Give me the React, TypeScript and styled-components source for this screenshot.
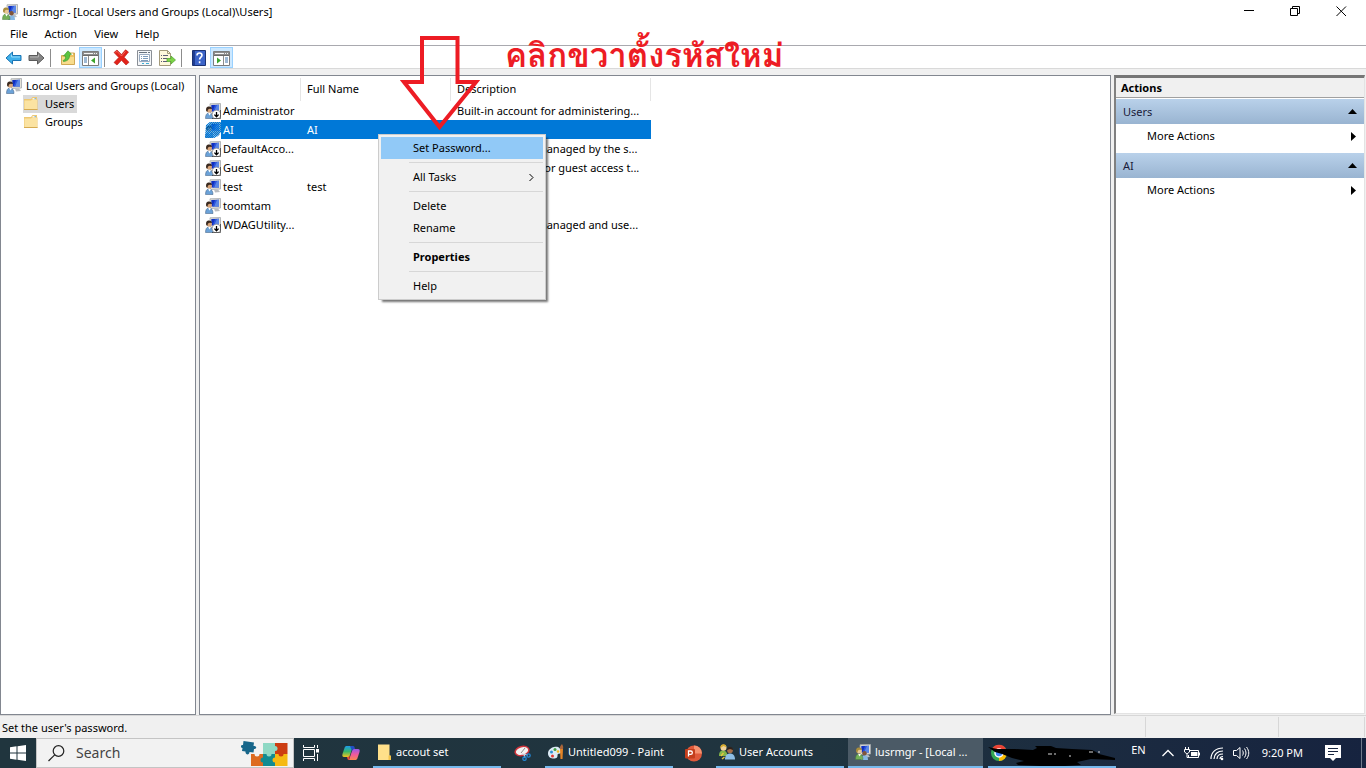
import React from 'react';
import styled, { createGlobalStyle, css } from 'styled-components';

const GlobalStyle = createGlobalStyle`
  * { box-sizing: border-box; }
  body { margin: 0; background: #f0f0f0; }
  body, button, input, table {
    font-family: "Noto Sans", "Open Sans", sans-serif;
    font-size: 11px;
    line-height: 16px;
    color: #000;
  }
  button { border: 0; padding: 0; background: none; text-align: left; }
  svg { display: block; flex: none; }
`;

/* ---------- window frame ---------- */

const Desktop = styled.div`
  display: flex;
  flex-direction: column;
  min-height: 100vh;
  position: relative;
`;

const TitleBar = styled.header`
  display: flex;
  align-items: center;
  height: 23px;
  padding: 0 4px 0 2px;
  gap: 5px;
  background: #fff;
`;

const Title = styled.h1`
  flex: 1;
  margin: 0;
  font-size: 11px;
  font-weight: 400;
`;

const CaptionButton = styled.button`
  display: flex;
  align-items: center;
  justify-content: center;
  width: 41px;
  height: 21px;
`;

const MenuBar = styled.nav`
  display: flex;
  align-items: center;
  height: 23px;
  padding-left: 2px;
  background: #fff;
  border-bottom: 1px solid #a9a9af;
`;

const MenuBarButton = styled.button`
  padding: 0 9px 0 8px;
`;

const Toolbar = styled.div`
  display: flex;
  align-items: flex-end;
  height: 23px;
  padding-left: 2px;
  background: #fff;
  border-bottom: 1px solid #d9d9d9;
`;

const ToolButton = styled.button<{ $on?: boolean }>`
  display: flex;
  align-items: center;
  justify-content: center;
  width: 23px;
  height: 21px;
  ${(p) => p.$on && css`
    background: #cce8ff;
    border: 1px solid #99d1ff;
  `}
`;

const ToolDivider = styled.span`
  width: 1px;
  height: 18px;
  margin: 0 5px 1px 2px;
  background: #8c8c8c;
`;

const Body = styled.main`
  flex: 1;
  display: grid;
  grid-template-columns: 196px minmax(0, 1fr) 252px;
  gap: 3px;
  padding-top: 6px;
`;

const Panel = styled.section`
  background: #fff;
  border: 1px solid #828790;
`;

/* ---------- tree ---------- */

const Tree = styled.ul`
  list-style: none;
  margin: 0;
  padding: 1px 0 0 5px;
`;

const Branch = styled(Tree)`
  padding: 0 0 0 17px;
`;

const TreeButton = styled.button<{ $selected?: boolean }>`
  display: flex;
  align-items: center;
  height: 18px;
  gap: 4px;
  padding-right: 3px;
  white-space: nowrap;
  ${(p) => p.$selected && css`background: #d9d9d9;`}
`;

const FolderLabel = styled.span`
  padding-left: 2px;
`;

/* ---------- user list ---------- */

const UserTable = styled.table`
  width: 451px;
  table-layout: fixed;
  border-collapse: collapse;
`;

const HeadCell = styled.th<{ $width: number }>`
  width: ${(p) => p.$width}px;
  height: 25px;
  padding: 0 0 0 6px;
  font-weight: 400;
  text-align: left;
  background: linear-gradient(#e5e5e5, #e5e5e5) right 2px / 1px 100% no-repeat;
  &:first-child { padding-left: 7px; }
`;

const Cell = styled.td<{ $selected?: boolean }>`
  height: 19px;
  padding: 0 0 0 6px;
  white-space: nowrap;
  overflow: hidden;
  ${(p) => p.$selected && css`
    background: #0078d7;
    color: #fff;
  `}
`;

const NameCell = styled.td`
  height: 19px;
  padding: 0 0 0 5px;
`;

const NameContent = styled.div`
  display: flex;
  align-items: center;
  height: 19px;
`;

const UserName = styled.span<{ $selected?: boolean }>`
  flex: 1;
  padding: 2px 0 1px 2px;
  white-space: nowrap;
  ${(p) => p.$selected && css`
    background: #0078d7;
    color: #fff;
  `}
`;

/* ---------- actions ---------- */

const ActionsPanel = styled.aside`
  margin-bottom: 1px;
  margin-right: 1px;
  background: #fff;
  border: 2px solid #696969;
  border-width: 3px 1px 1px 2px;
  border-color: #767676 #e3e3e3 #e3e3e3 #808080;
`;

const ActionsTitle = styled.h2`
  margin: 0 0 1px;
  height: 20px;
  padding: 2px 5px;
  font-size: 11px;
  font-weight: 700;
  background: #f0f0f0;
  border-bottom: 1px solid #a0a0a0;
`;

const GroupHeader = styled.button`
  display: flex;
  align-items: center;
  justify-content: space-between;
  width: 100%;
  height: 25px;
  padding: 0 7px;
  color: #1b1b3a;
  background: linear-gradient(#b9d1ea, #99b4d1);
`;

const ActionRow = styled.button`
  display: flex;
  align-items: center;
  justify-content: space-between;
  width: 100%;
  height: 24px;
  margin-bottom: 5px;
  padding: 0 7px 0 31px;
`;

/* ---------- status bar ---------- */

const StatusBar = styled.footer`
  display: flex;
  height: 23px;
  padding-right: 1px;
  border-top: 1px solid #d7d7d7;
`;

const StatusPane = styled.div<{ $width?: number }>`
  ${(p) => (p.$width ? css`width: ${p.$width}px;` : css`flex: 1;`)}
  margin: 1px 0;
  padding: 3px 2px;
  line-height: 16px;
  border-right: 1px solid #d7d7d7;
`;

/* ---------- context menu ---------- */

const ContextMenu = styled.menu`
  position: absolute;
  left: 378px;
  top: 134px;
  width: 168px;
  margin: 0;
  padding: 2px;
  list-style: none;
  background: #f1f1f1;
  border: 1px solid #ccc;
  box-shadow: 3px 3px 2px -1px rgba(0, 0, 0, 0.55);
`;

const ContextItem = styled.button<{ $active?: boolean; $bold?: boolean }>`
  display: flex;
  align-items: center;
  justify-content: space-between;
  width: 100%;
  height: 22px;
  padding: 0 9px 0 32px;
  font-weight: ${(p) => (p.$bold ? 700 : 400)};
  background: ${(p) => (p.$active ? '#91c9f7' : 'transparent')};
`;

const ContextDivider = styled.li`
  height: 1px;
  margin: 3px 0 3px 28px;
  background: #d7d7d7;
`;

/* ---------- annotation drawn over the window ---------- */

const ArrowMark = styled.svg`
  position: absolute;
  left: 400px;
  top: 34px;
`;

const Caption = styled.p`
  position: absolute;
  left: 505px;
  top: 31px;
  margin: 0;
  font-family: "Loma", "Garuda", "Waree", "Noto Sans Thai Looped", "Noto Sans Thai", sans-serif;
  font-size: 33px;
  font-weight: 600;
  line-height: 50px;
  white-space: nowrap;
  color: #ed1c24;
`;

/* ---------- taskbar ---------- */

const Taskbar = styled.footer`
  display: flex;
  height: 30px;
  background: linear-gradient(90deg, #20353e, #20343f 60%, #1a2940 85%, #16233f);
  color: #fff;
`;

const StartButton = styled.button`
  display: flex;
  align-items: center;
  justify-content: center;
  width: 36px;
`;

const SearchBox = styled.label`
  display: flex;
  align-items: center;
  width: 258px;
  padding: 0 5px 0 11px;
  gap: 11px;
  background: #f2f2f2;
  border: 1px solid #c4c4c4;
`;

const SearchInput = styled.input`
  flex: 1;
  min-width: 0;
  padding: 0;
  border: 0;
  outline: 0;
  background: none;
  font-size: 14px;
  line-height: 20px;
  &::placeholder { color: #444; opacity: 1; }
`;

const IconTask = styled.button<{ $width: number }>`
  display: flex;
  align-items: center;
  justify-content: center;
  width: ${(p) => p.$width}px;
  margin-right: 2px;
`;

const WindowTask = styled.button<{ $active?: boolean; $wide?: boolean }>`
  display: flex;
  align-items: center;
  gap: 4px;
  width: ${(p) => (p.$wide ? 135 : 128)}px;
  margin: ${(p) => (p.$wide ? '0 5px 0 4px' : 0)};
  padding-left: ${(p) => (p.$wide ? 7 : 3)}px;
  color: #fff;
  white-space: nowrap;
  border-bottom: 2px solid #76b9ed;
  background: ${(p) => (p.$active ? '#4b5a66' : 'transparent')};
`;

const ChromeTask = styled(WindowTask)`
  padding: 0;
`;

const Tray = styled.div`
  display: flex;
  align-items: center;
  gap: 9px;
  margin-left: auto;
  border-right: 1px solid #6f7a8b;
  margin-right: 4px;
`;

const TrayButton = styled.button`
  display: flex;
  align-items: center;
  color: #fff;
`;

const Language = styled(TrayButton)`
  height: 24px;
  align-self: flex-start;
  margin-right: 6px;
`;

const Clock = styled.time`
  margin: 0 13px 0 3px;
`;

const NoticeButton = styled(TrayButton)`
  margin-right: 20px;
`;

/* ---------- icons ---------- */

type UserIconProps = { disabled?: boolean; dithered?: boolean; pair?: boolean };

const UserIcon = ({ disabled, dithered, pair }: UserIconProps) => (
  <svg width="16" height="16" viewBox="0 0 16 16" aria-hidden="true">
    <path d="M5 .8L15.500.5v9.500L5.500 10.500z" fill="#e4e2d8" stroke="#a5a8ac" strokeWidth="0.800" />
    <path d="M6.300 2L14 1.800v6.700H6.300z" fill="#1030c0" />
    <path d="M10.500 1.900L14 1.800v6.700H9z" fill="#5a86e6" />
    <path d="M10 1.900h2L9 8.500H7.500z" fill="#2c55dc" />
    <path d="M9 10.500h4l2 2.500-5 .5z" fill="#b9bcc0" />
    {pair && (
      <>
        <path d="M6 16c0-3.500 1.200-4.700 3.500-4.700S13 12.500 13 16z" fill="#86b8e4" />
        <circle cx="9.500" cy="9.300" r="2.200" fill="#80553a" />
      </>
    )}
    <path d="M0.500 15.500c0-3.500 1-5.500 3.500-5.500s4 2 4 5.500z" fill={pair ? '#74b058' : '#6ba2d8'} stroke={pair ? '#4b7a3c' : '#36577b'} strokeWidth="0.500" />
    <path d="M3.200 10l1.300 2.500L6 10z" fill="#fff" />
    <circle cx="4.300" cy="7" r="2.600" fill={pair ? '#e8c895' : '#d9a57a'} />
    <path d="M1.200 8C0.700 4.500 2 3.500 4 3.500c2 0 3 1 2.900 2.500L4.500 5.800 3 6.500 2.300 9z" fill={pair ? '#a98c3c' : '#3b2a20'} />
    {disabled && (
      <>
        <circle cx="11.500" cy="11.500" r="4.300" fill="#fff" stroke="#8a8a8a" strokeWidth="0.700" />
        <path d="M7 15.500h8.500V7" fill="none" stroke="#333" strokeWidth="0.700" />
        <path d="M11.500 9v4.500M9.400 11.600l2.100 2.200 2.100-2.200" fill="none" stroke="#000" strokeWidth="1.300" />
      </>
    )}
    {dithered && (
      <>
        <defs>
          <pattern id="dither" width="2" height="2" patternUnits="userSpaceOnUse">
            <path d="M0 0h1v1H0zM1 1h1v1H1z" fill="#0078d7" shapeRendering="crispEdges" />
          </pattern>
        </defs>
        <path d="M1 3L5 0h11v10l-3 4-4 2H0z" fill="#0078d7" opacity="0.450" />
        <path d="M1 3L5 0h11v10l-3 4-4 2H0z" fill="url(#dither)" />
      </>
    )}
  </svg>
);

const Folder = () => (
  <svg width="16" height="16" viewBox="0 0 16 16" aria-hidden="true">
    <path d="M1 3h7l1.500-2H14v2.500h.5V14H1z" fill="#eec873" />
    <path d="M9.500 2.200H13v1.300H9.500z" fill="#fff" />
    <path d="M11.500 2.200H13v1h-1.500z" fill="#58a6dc" />
    <path d="M1.500 4.500h6.500l1-.8h5v9.300h-12.500z" fill="#fbe3a2" />
    <path d="M1 13.500h13.500" stroke="#d6ab52" />
  </svg>
);

const Arrow = ({ forward }: { forward?: boolean }) => (
  <svg width="17" height="16" viewBox="0 0 17 16" aria-hidden="true">
    <path
      d={forward ? 'M16 8L9.500 2v3.500H1v5h8.500V14z' : 'M1 8l6.500-6v3.500H16v5H7.500V14z'}
      fill={forward ? '#868686' : '#3fb0ea'}
      stroke={forward ? '#5a5a5a' : '#1a74b4'}
      strokeLinejoin="round"
    />
    <path d={forward ? 'M2 7h8.500V4.500' : 'M15 7H6.500V4.500'} fill="none" stroke={forward ? '#b4b4b4' : '#94dafa'} />
  </svg>
);

const UpFolder = () => (
  <svg width="16" height="16" viewBox="0 0 16 16" aria-hidden="true">
    <path d="M1.500 5.500H8l1.500-2.500h5v11.500h-13z" fill="#eec262" stroke="#c89b3c" strokeWidth="0.800" />
    <path d="M10 3.500h3V5h-3z" fill="#fff" />
    <path d="M2 7h12v7H2z" fill="#f8dc8c" />
    <path d="M3 10.500c2.200-.5 2.800-2 2.500-4.500L3.500 6 8 .8l3.500 3.500-2 .7c.3 3.500-1.500 6-6 6.500z" fill="#5cc440" stroke="#36952a" strokeWidth="0.600" />
  </svg>
);

const PaneIcon = ({ right }: { right?: boolean }) => (
  <svg width="17" height="16" viewBox="0 0 17 16" aria-hidden="true">
    <path d="M.5 1.500h16v14H.5z" fill="#fff" stroke="#7c7c7c" />
    <path d="M1 2h15v3H1z" fill="#8c8c8c" />
    <path d="M2 3.500h9M12 3.500h1M14 3.500h1" stroke="#f5f5f5" />
    <path d="M1 5.500h15" stroke="#6b6b6b" />
    {right ? (
      <>
        <path d="M10.500 6v9" stroke="#8c8c8c" />
        <path d="M12 8h3M12 10h3M12 12h3" stroke="#3d73a8" />
        <path d="M4 7.500v6L8 10.500z" fill="#3ba52d" />
      </>
    ) : (
      <>
        <path d="M6.500 6v9" stroke="#8c8c8c" />
        <path d="M2 8h3M2 10h3M2 12h3" stroke="#3d73a8" />
        <path d="M13 7.500v6L9 10.500z" fill="#3ba52d" />
      </>
    )}
  </svg>
);

const DeleteIcon = () => (
  <svg width="17" height="17" viewBox="0 0 17 17" aria-hidden="true">
    <path d="M1 3.500L4 1l4.500 4.500L12.500.8 15.500 3l-4.300 5.300 4.800 5-3 2.700-4.500-4.700L4 16l-3-2.500 4.800-5z" fill="#e2231a" stroke="#b51812" strokeWidth="0.600" strokeLinejoin="round" />
    <path d="M2.500 3.500L4 2.300l4.500 4.700 4-4.700" fill="none" stroke="#f4736a" strokeWidth="0.800" />
  </svg>
);

const PropertiesIcon = () => (
  <svg width="16" height="16" viewBox="0 0 16 16" aria-hidden="true">
    <path d="M.5.500h14v15H.5z" fill="#f4f6f8" stroke="#8a8f96" />
    <path d="M2.500 4.500h10v7h-10z" fill="#fff" stroke="#9aabc0" />
    <path d="M2 2.500h8M11 2.500h2" stroke="#68737f" />
    <path d="M4 6.500h1M6 6.500h5M4 8.500h1M6 8.500h5M4 10.500h7" stroke="#7d9cbc" />
    <path d="M5 13.500h2M9 13.500h3" stroke="#3dafd8" />
  </svg>
);

const ExportIcon = () => (
  <svg width="17" height="16" viewBox="0 0 17 16" aria-hidden="true">
    <path d="M.5.500h8l3 3v12H.5z" fill="#fff8dc" stroke="#a49a7a" />
    <path d="M8.500.500v3h3" fill="none" stroke="#a49a7a" />
    <path d="M2 5.500h1M4 5.500h5M2 8.500h1M4 8.500h4M2 11.500h1M4 11.500h4" stroke="#5c5c76" />
    <path d="M8 8.500h4V6l4.500 4-4.500 4v-2.500H8z" fill="#7ed348" stroke="#4ba42a" strokeWidth="0.700" />
  </svg>
);

const HelpIcon = () => (
  <svg width="14" height="16" viewBox="0 0 14 16" aria-hidden="true">
    <path d="M.5.500h13v15H.5z" fill="#3c64c8" stroke="#1c3273" />
    <path d="M1 1h2v14H1z" fill="#1f3d92" />
    <path d="M5 5.500C5 3.500 6 3 7.500 3S10 4 10 5.300C10 7 7.600 7.300 7.600 9.500M7.600 11.200v2" fill="none" stroke="#fff" strokeWidth="1.600" />
  </svg>
);

const PuzzleArt = () => (
  <svg width="47" height="26" viewBox="0 0 47 26" aria-hidden="true">
    <path d="M10 14h12v12H10z" fill="#dd6b20" />
    <path d="M22 3h12v11H22z" fill="#8ed8c4" />
    <path d="M34 3h12.500v11H34z" fill="#cc3d12" />
    <path d="M22 14h12v12H22z" fill="#118b91" />
    <path d="M34 14h12.500v12H34z" fill="#f5b912" />
    <circle cx="34" cy="8.500" r="2.500" fill="#8ed8c4" />
    <circle cx="22" cy="20" r="2.500" fill="#118b91" />
    <circle cx="28" cy="14" r="2.500" fill="#8ed8c4" />
    <circle cx="34" cy="20" r="2.500" fill="#f5b912" />
    <circle cx="40" cy="14" r="2.500" fill="#cc3d12" />
    <circle cx="16" cy="14" r="2.500" fill="#f2f2f2" />
    <path d="M2.500 1L13 2.500l-.5 3.500c3-.8 4 3 .5 3l-.5 3.500-4-.5c0 3.500-4.500 3-4-.5L1 11l.5-3C-1 7.500-.5 4.500 2 5z" fill="#17668a" />
  </svg>
);

const CopilotIcon = () => (
  <svg width="18" height="16" viewBox="0 0 18 16" aria-hidden="true">
    <defs>
      <linearGradient id="cpLeft" x1="0" y1="0" x2="0" y2="1">
        <stop offset="0" stopColor="#1d9bea" />
        <stop offset="0.500" stopColor="#37b96b" />
        <stop offset="1" stopColor="#f3c51f" />
      </linearGradient>
      <linearGradient id="cpRight" x1="0" y1="0" x2="0" y2="1">
        <stop offset="0" stopColor="#9a58e8" />
        <stop offset="0.500" stopColor="#f05a9c" />
        <stop offset="1" stopColor="#fb8650" />
      </linearGradient>
    </defs>
    <path d="M5 1h6L8 10c-.5 1.500-1 2-2.500 2H2C.5 12 0 11 .5 9L2.500 3C3 1.500 3.500 1 5 1z" fill="url(#cpLeft)" />
    <path d="M13 15H7l3-9c.5-1.500 1-2 2.500-2H16c1.500 0 2 1 1.500 3l-2 6c-.5 1.500-1 2-2.500 2z" fill="url(#cpRight)" />
    <path d="M8 1h3c1.500 0 1.500 1 2 3-2 0-2.500.5-3 2z" fill="#224fc4" />
    <path d="M5 12c2 0 2.500-.5 3-2l-1 5c-1.500 0-1.500-1-2-3z" fill="#f04b3a" />
  </svg>
);

const TaskFolder = () => (
  <svg width="16" height="17" viewBox="0 0 16 17" aria-hidden="true">
    <path d="M2 0.500h11.500v11l1.500 1V16H2z" fill="#ffe08a" />
    <path d="M12.500 11.500H15V16h-2.500z" fill="#f2c34a" />
  </svg>
);

const SnipIcon = () => (
  <svg width="17" height="16" viewBox="0 0 17 16" aria-hidden="true">
    <ellipse cx="8" cy="6" rx="7" ry="4.500" fill="#f4f2f2" stroke="#d0343c" strokeWidth="1.500" transform="rotate(-15 8 6)" />
    <path d="M7 8l4-5" stroke="#8b8b8b" />
    <path d="M8 9l6 1M11 13l-1-4" stroke="#c5d4e0" strokeWidth="1.200" />
    <circle cx="14.500" cy="10.500" r="1.700" fill="none" stroke="#2385d0" strokeWidth="1.300" />
    <circle cx="10.500" cy="13.700" r="1.700" fill="none" stroke="#2385d0" strokeWidth="1.300" />
  </svg>
);

const PaintIcon = () => (
  <svg width="16" height="16" viewBox="0 0 16 16" aria-hidden="true">
    <path d="M6 3c4-1 7 1 7 5 0 2-2 1.500-3 2s0 2-1 3.500C7 15.500 0 15 0 9.500 0 6 3 3.600 6 3z" fill="#dcebf5" />
    <circle cx="3.500" cy="8" r="1.500" fill="#2f8fd5" />
    <circle cx="7" cy="5.500" r="1.500" fill="#43a047" />
    <circle cx="4.500" cy="12" r="1.500" fill="#e53935" />
    <circle cx="10" cy="7.500" r="1.300" fill="#f5b81c" />
    <path d="M12 5h3l-.5 10h-2z" fill="#e38426" />
    <path d="M12 5c-.5-2 .5-3.500 2-5 1 1.500 1.500 3 1 5z" fill="#a8653a" />
  </svg>
);

const PowerPointIcon = () => (
  <svg width="17" height="17" viewBox="0 0 17 17" aria-hidden="true">
    <circle cx="9" cy="8.500" r="8" fill="#e0593a" />
    <path d="M9 .5a8 8 0 0 1 8 8H9z" fill="#f5916f" />
    <rect x="0" y="4" width="10" height="9.500" rx="1" fill="#c43e1c" />
    <path d="M3.500 11.500v-5.500h2.200a1.600 1.600 0 0 1 0 3.300H3.500" fill="none" stroke="#fff" strokeWidth="1.300" />
  </svg>
);

const AccountsIcon = () => (
  <svg width="16" height="16" viewBox="0 0 16 16" aria-hidden="true">
    <path d="M0 12c0-4 1.500-5.500 4-5.500S8 8 8.500 12z" fill="#83b548" />
    <circle cx="4.500" cy="3.700" r="3" fill="#f0d29a" />
    <path d="M1.500 4C1 1 3 0 5 .3c2 .3 2.500 1.700 2.300 3L4.500 2z" fill="#d8ac2e" />
    <path d="M6 15.500C6 11.500 8 9.500 11 9.500s5 2 5 6z" fill="#8ebfe6" />
    <circle cx="11" cy="6.500" r="2.800" fill="#a86f48" />
    <path d="M8 6c0-2 1-3 3-3s3.300 1 3 3l-3-1z" fill="#2d211b" />
    <path d="M2 12l2.500-3M3 15l2.500-2" stroke="#e6c440" strokeWidth="1.500" />
  </svg>
);

const ScribbledChrome = () => (
  <svg width="128" height="28" viewBox="0 0 128 28" role="img" aria-label="Chrome window, title crossed out">
    <circle cx="11" cy="15" r="8" fill="#34a853" />
    <path d="M4 11a8 8 0 0 1 14 0l-1 4h-6z" fill="#ea4335" />
    <path d="M11 15h8a8 8 0 0 1-8 8z" fill="#fbbc05" />
    <circle cx="11" cy="15" r="4" fill="#4285f4" stroke="#fff" strokeWidth="1.500" />
    <path d="M0 9l9 2 18 0 18 1 4-2-2-2h16l5 2 16 1 20 1 4 2 3 2 16 4v2l-24-1-14 3 4 3-16 1 3 2h-12l-16-2-22-1-2-2 8-2-12-3-10-4-7-2z" fill="#000" />
    <path d="M60 16h4M66 16h2M81 18h2M101 14h4M110 14h2" stroke="#d7d7d7" />
  </svg>
);

const line = { fill: 'none', stroke: 'currentColor' } as const;

const Triangle = ({ side }: { side?: boolean }) => (
  <svg width="9" height="9" viewBox="0 0 9 9" aria-hidden="true">
    <path d={side ? 'M3 0v9l5-4.500z' : 'M0 7h9L4.500 2z'} fill="#000" />
  </svg>
);

/* ---------- data ---------- */

type User = { name: string; full?: string; about?: string; disabled?: boolean; selected?: boolean };

const users: User[] = [
  { name: 'Administrator', about: 'Built-in account for administering...', disabled: true },
  { name: 'AI', full: 'AI', selected: true },
  { name: 'DefaultAcco...', about: 'A user account managed by the s...', disabled: true },
  { name: 'Guest', about: 'Built-in account for guest access t...', disabled: true },
  { name: 'test', full: 'test' },
  { name: 'toomtam' },
  { name: 'WDAGUtility...', about: 'A user account managed and use...', disabled: true },
];

const App = () => (
  <>
    <GlobalStyle />
    <Desktop>
      <TitleBar>
        <UserIcon pair />
        <Title>lusrmgr - [Local Users and Groups (Local)\Users]</Title>
        <CaptionButton aria-label="Minimize">
          <svg width="11" height="11" viewBox="0 0 11 11"><path d="M0 4.500h10" {...line} /></svg>
        </CaptionButton>
        <CaptionButton aria-label="Restore">
          <svg width="11" height="11" viewBox="0 0 11 11"><path d="M.5 2.500h7v7h-7zM2.500 2.500v-2h7v7h-2" {...line} /></svg>
        </CaptionButton>
        <CaptionButton aria-label="Close">
          <svg width="11" height="11" viewBox="0 0 11 11"><path d="M.5.500l9.500 9.500M10 .5L.5 10" {...line} /></svg>
        </CaptionButton>
      </TitleBar>

      <MenuBar aria-label="Menu bar">
        <MenuBarButton>File</MenuBarButton>
        <MenuBarButton>Action</MenuBarButton>
        <MenuBarButton>View</MenuBarButton>
        <MenuBarButton>Help</MenuBarButton>
      </MenuBar>

      <Toolbar role="toolbar" aria-label="Standard">
        <ToolButton aria-label="Back"><Arrow /></ToolButton>
        <ToolButton aria-label="Forward"><Arrow forward /></ToolButton>
        <ToolDivider />
        <ToolButton aria-label="Up one level"><UpFolder /></ToolButton>
        <ToolButton aria-label="Show console tree" $on><PaneIcon /></ToolButton>
        <ToolDivider />
        <ToolButton aria-label="Delete"><DeleteIcon /></ToolButton>
        <ToolButton aria-label="Properties"><PropertiesIcon /></ToolButton>
        <ToolButton aria-label="Export list"><ExportIcon /></ToolButton>
        <ToolDivider />
        <ToolButton aria-label="Help"><HelpIcon /></ToolButton>
        <ToolButton aria-label="Show action pane" $on><PaneIcon right /></ToolButton>
      </Toolbar>

      <Body>
        <Panel aria-label="Console tree">
          <Tree>
            <li>
              <TreeButton><UserIcon />Local Users and Groups (Local)</TreeButton>
              <Branch>
                <li><TreeButton $selected><Folder /><FolderLabel>Users</FolderLabel></TreeButton></li>
                <li><TreeButton><Folder /><FolderLabel>Groups</FolderLabel></TreeButton></li>
              </Branch>
            </li>
          </Tree>
        </Panel>

        <Panel aria-label="Users">
          <UserTable>
            <thead>
              <tr>
                <HeadCell $width={101}>Name</HeadCell>
                <HeadCell $width={150}>Full Name</HeadCell>
                <HeadCell $width={200}>Description</HeadCell>
              </tr>
            </thead>
            <tbody>
              {users.map((u) => (
                <tr key={u.name}>
                  <NameCell>
                    <NameContent>
                      <UserIcon disabled={u.disabled} dithered={u.selected} />
                      <UserName $selected={u.selected}>{u.name}</UserName>
                    </NameContent>
                  </NameCell>
                  <Cell $selected={u.selected}>{u.full}</Cell>
                  <Cell $selected={u.selected}>{u.about}</Cell>
                </tr>
              ))}
            </tbody>
          </UserTable>
        </Panel>

        <ActionsPanel>
          <ActionsTitle>Actions</ActionsTitle>
          {['Users', 'AI'].map((group) => (
            <div key={group}>
              <GroupHeader>{group}<Triangle /></GroupHeader>
              <ActionRow>More Actions<Triangle side /></ActionRow>
            </div>
          ))}
        </ActionsPanel>
      </Body>

      <StatusBar>
        <StatusPane>Set the user's password.</StatusPane>
        <StatusPane $width={133} />
        <StatusPane $width={86} />
      </StatusBar>

      <Taskbar>
        <StartButton aria-label="Start">
          <svg width="16" height="16" viewBox="0 0 16 16">
            <path d="M0 2.300L6.500 1.300v6.200H0zM7.500 1.200L16 0v7.500H7.500zM0 8.500h6.500v6.200L0 13.700zM7.500 8.500H16V16l-8.500-1.200z" fill="#fff" />
          </svg>
        </StartButton>
        <SearchBox>
          <svg width="17" height="17" viewBox="0 0 17 17" aria-hidden="true">
            <circle cx="10.500" cy="6" r="5.300" fill="none" stroke="#222" strokeWidth="1.200" />
            <path d="M6.700 9.800L.5 16" stroke="#222" strokeWidth="1.200" />
          </svg>
          <SearchInput type="text" placeholder="Search" aria-label="Search" />
          <PuzzleArt />
        </SearchBox>
        <IconTask $width={34} aria-label="Task view">
          <svg width="17" height="16" viewBox="0 0 17 16">
            <path d="M.5 0v2.500h11V0M.5 16v-2.500h11V16M.5 4.500h11v7H.5zM14.500 0v3M14.500 9v7" fill="none" stroke="#fff" />
            <path d="M13 4h3v3.500h-3z" fill="#fff" />
          </svg>
        </IconTask>
        <IconTask $width={41} aria-label="Copilot"><CopilotIcon /></IconTask>
        <WindowTask><TaskFolder />accout set</WindowTask>
        <IconTask $width={42} aria-label="Snipping Tool"><SnipIcon /></IconTask>
        <WindowTask><PaintIcon />Untitled099 - Paint</WindowTask>
        <IconTask $width={41} aria-label="PowerPoint"><PowerPointIcon /></IconTask>
        <WindowTask><AccountsIcon />User Accounts</WindowTask>
        <WindowTask $active $wide><UserIcon pair />lusrmgr - [Local ...</WindowTask>
        <ChromeTask><ScribbledChrome /></ChromeTask>
        <Tray>
          <Language>EN</Language>
          <TrayButton aria-label="Show hidden icons">
            <svg width="14" height="16" viewBox="0 0 14 16"><path d="M1.500 11L7 5.500l5.500 5.500" {...line} strokeWidth="1.300" /></svg>
          </TrayButton>
          <TrayButton aria-label="Battery">
            <svg width="17" height="16" viewBox="0 0 17 16">
              <path d="M5 5.500h9.500v7H4.500V10M15.500 7.500v3" {...line} />
              <path d="M7 7h6.500v4H7z" fill="currentColor" />
              <path d="M1.500 2v2.500M4.500 2v2.500M.5 4.500h5V7L3.500 8.500h-1L.5 7zM3 8v4.500h2" {...line} />
            </svg>
          </TrayButton>
          <TrayButton aria-label="Wi-Fi">
            <svg width="14" height="16" viewBox="0 0 14 16">
              <path d="M1 14C1 7 6 3 13 3M4 14c0-4.500 3.500-8 9-8M7 14c0-3 2-5 6-5M10 14c0-1.500 1-2.500 3-2.500" {...line} strokeWidth="1.200" />
              <circle cx="12" cy="14" r="1.300" fill="currentColor" />
            </svg>
          </TrayButton>
          <TrayButton aria-label="Volume">
            <svg width="17" height="16" viewBox="0 0 17 16">
              <path d="M.5 5.500h3L7 2.500v11L3.500 10.500h-3zM9.500 5.500c1 1.500 1 3.500 0 5M11.500 3.500c2 3 2 6 0 9M13.500 2c3 4 3 8 0 12" {...line} />
            </svg>
          </TrayButton>
          <Clock dateTime="21:20">9:20 PM</Clock>
          <NoticeButton aria-label="Notifications">
            <svg width="16" height="16" viewBox="0 0 16 16">
              <path d="M0 0h16v13h-5l-3 3-3-3H0z" fill="#fff" />
              <path d="M3 3.500h10M3 6.500h10M3 9.500h6" stroke="#17243f" />
            </svg>
          </NoticeButton>
        </Tray>
      </Taskbar>

      <ContextMenu>
        <li><ContextItem $active>Set Password...</ContextItem></li>
        <ContextDivider />
        <li>
          <ContextItem>
            All Tasks
            <svg width="5" height="9" viewBox="0 0 5 9" aria-hidden="true"><path d="M.5 1l3.500 3.500L.5 8" {...line} /></svg>
          </ContextItem>
        </li>
        <ContextDivider />
        <li><ContextItem>Delete</ContextItem></li>
        <li><ContextItem>Rename</ContextItem></li>
        <ContextDivider />
        <li><ContextItem $bold>Properties</ContextItem></li>
        <ContextDivider />
        <li><ContextItem>Help</ContextItem></li>
      </ContextMenu>

      <ArrowMark width="80" height="100" viewBox="0 0 80 100" aria-hidden="true">
        <path d="M22 4h35.500v44H76L39.500 93 4 48h18z" fill="none" stroke="#ed1c24" strokeWidth="4" />
      </ArrowMark>
      <Caption lang="th">คลิกขวาตั้งรหัสใหม่</Caption>
    </Desktop>
  </>
);

export default App;
